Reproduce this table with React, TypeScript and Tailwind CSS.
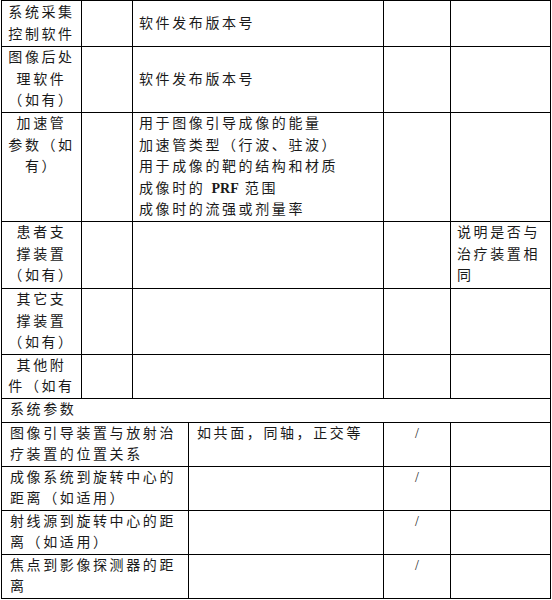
import type { ReactNode } from "react";

type TopRow = {
  label: string[];
  content?: ReactNode[];
  note?: string[];
  middle?: boolean;
  height: string;
};

type BottomRow = {
  label: string[];
  value?: string;
  height: string;
};

const topRows: TopRow[] = [
  { label: ["系统采集", "控制软件"], content: ["软件发布版本号"], middle: true, height: "h-[46px]" },
  { label: ["图像后处", "理软件", "（如有）"], content: ["软件发布版本号"], middle: true, height: "h-[66px]" },
  {
    label: ["加速管", "参数（如", "有）"],
    content: [
      "用于图像引导成像的能量",
      "加速管类型（行波、驻波）",
      "用于成像的靶的结构和材质",
      <>
        成像时的 <span className="font-semibold tracking-normal">PRF</span> 范围
      </>,
      "成像时的流强或剂量率",
    ],
    height: "h-[109px]",
  },
  { label: ["患者支", "撑装置", "（如有）"], note: ["说明是否与", "治疗装置相", "同"], height: "h-[67px]" },
  { label: ["其它支", "撑装置", "（如有）"], height: "h-[64px]" },
  { label: ["其他附", "件（如有"], height: "h-[44px]" },
];

const bottomRows: BottomRow[] = [
  { label: ["图像引导装置与放射治", "疗装置的位置关系"], value: "如共面，同轴，正交等", height: "h-[43px]" },
  { label: ["成像系统到旋转中心的", "距离（如适用）"], height: "h-[44px]" },
  { label: ["射线源到旋转中心的距", "离（如适用）"], height: "h-[44px]" },
  { label: ["焦点到影像探测器的距", "离"], height: "h-[43px]" },
];

const cell = "border-[1.5px] border-black p-0";

const Lines = ({ lines }: { lines: ReactNode[] }) => (
  <>
    {lines.map((line, i) => (
      <div key={i} className="whitespace-nowrap">
        {line}
      </div>
    ))}
  </>
);

const App = () => {
  return (
    <div className="min-h-screen bg-white pl-px font-['Liberation_Serif','Noto_Sans_CJK_SC',serif] text-[14px] leading-[21.5px] tracking-[2.6px] text-[#1a1a1a]">
      <table className="w-[549px] table-fixed border-collapse">
        <colgroup>
          <col className="w-[80px]" />
          <col className="w-[51px]" />
          <col className="w-[56px]" />
          <col className="w-[195px]" />
          <col className="w-[67px]" />
          <col className="w-[100px]" />
        </colgroup>
        <tbody>
          {/* Device rows */}
          {topRows.map((row, i) => (
            <tr key={i} className={row.height}>
              <td className={`${cell} text-center ${row.middle ? "align-middle" : "align-top"}`}>
                <Lines lines={row.label} />
              </td>
              <td className={cell} />
              <td colSpan={2} className={`${cell} pl-[6px] ${row.middle ? "align-middle" : "align-top"}`}>
                {row.content && <Lines lines={row.content} />}
              </td>
              <td className={cell} />
              <td className={`${cell} pl-[6px] align-top`}>
                {row.note && <Lines lines={row.note} />}
              </td>
            </tr>
          ))}

          {/* Section title */}
          <tr className="h-[24px]">
            <td colSpan={6} className={`${cell} pl-[8px] align-middle`}>
              系统参数
            </td>
          </tr>

          {/* System parameter rows */}
          {bottomRows.map((row, i) => (
            <tr key={i} className={row.height}>
              <td colSpan={3} className={`${cell} pl-[8px] align-top`}>
                <Lines lines={row.label} />
              </td>
              <td className={`${cell} pl-[8px] align-top whitespace-nowrap`}>{row.value}</td>
              <td className={`${cell} text-center align-top tracking-normal`}>/</td>
              <td className={cell} />
            </tr>
          ))}
        </tbody>
      </table>
    </div>
  );
};

export default App;
